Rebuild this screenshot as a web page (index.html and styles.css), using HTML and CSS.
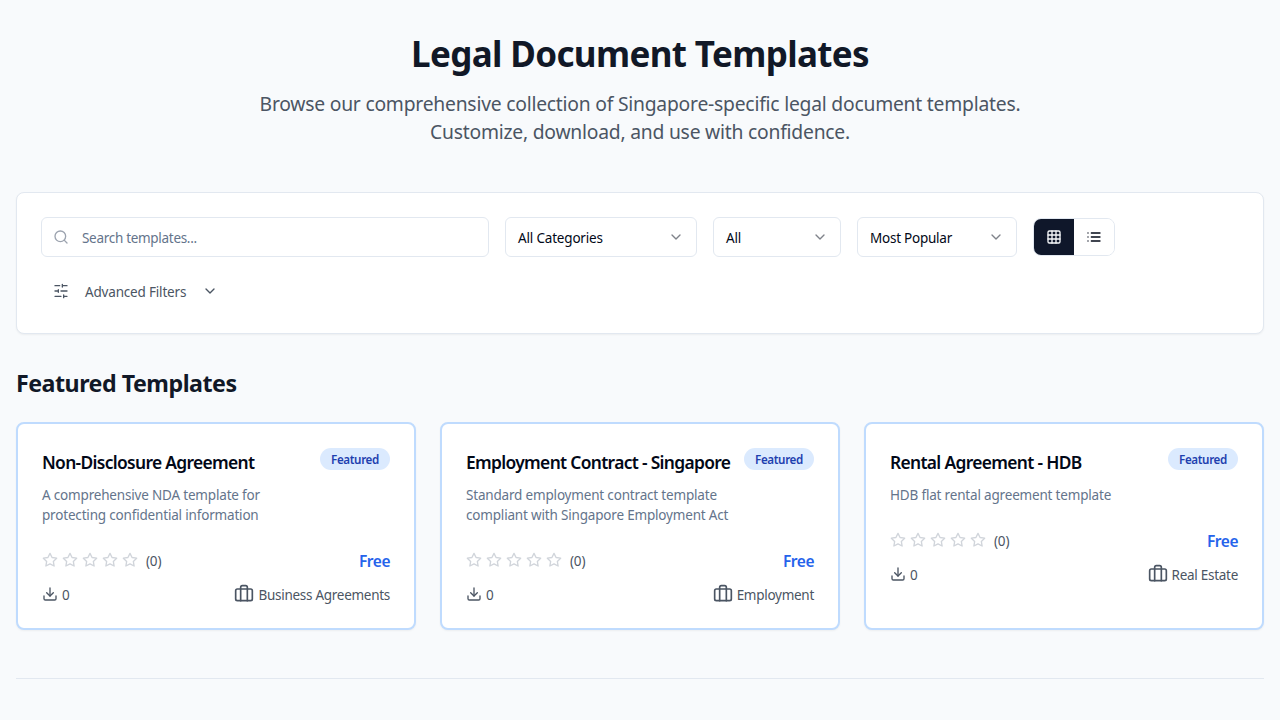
FILE: index.html
```html
<!DOCTYPE html>
<html lang="en">
<head>
<meta charset="utf-8">
<title>Legal Document Templates</title>
<link rel="stylesheet" href="styles.css">
</head>
<body>
<svg class="defs" width="0" height="0" aria-hidden="true">
  <symbol id="chevron" viewBox="0 0 24 24"><path d="m6 9 6 6 6-6"/></symbol>
  <symbol id="star" viewBox="0 0 24 24"><path d="M12 2l3.09 6.26L22 9.27l-5 4.87 1.18 6.88L12 17.77l-6.18 3.25L7 14.14 2 9.27l6.91-1.01L12 2z"/></symbol>
  <symbol id="download" viewBox="0 0 24 24"><path d="M21 15v4a2 2 0 0 1-2 2H5a2 2 0 0 1-2-2v-4"/><path d="m7 10 5 5 5-5"/><path d="M12 15V3"/></symbol>
  <symbol id="briefcase" viewBox="0 0 24 24"><rect width="20" height="14" x="2" y="6" rx="2"/><path d="M16 20V4a2 2 0 0 0-2-2h-4a2 2 0 0 0-2 2v16"/></symbol>
</svg>
<main class="page">
  <header class="hero">
    <h1>Legal Document Templates</h1>
    <p>Browse our comprehensive collection of Singapore-specific legal document templates. Customize, download, and use with confidence.</p>
  </header>
  <section class="filters">
    <div class="filter-row">
      <div class="search"><svg class="icon s16 muted" viewBox="0 0 24 24"><circle cx="11" cy="11" r="8"/><path d="m21 21-4.3-4.3"/></svg><span>Search templates...</span></div>
      <div class="select category"><span>All Categories</span><svg class="icon s16"><use href="#chevron"/></svg></div>
      <div class="select price"><span>All</span><svg class="icon s16"><use href="#chevron"/></svg></div>
      <div class="select sort"><span>Most Popular</span><svg class="icon s16"><use href="#chevron"/></svg></div>
      <div class="view-toggle">
        <button class="toggle active" aria-label="Grid"><svg class="icon s16" viewBox="0 0 24 24"><rect width="18" height="18" x="3" y="3" rx="2"/><path d="M3 9h18M3 15h18M9 3v18M15 3v18"/></svg></button>
        <button class="toggle" aria-label="List"><svg class="icon s16" viewBox="0 0 24 24"><path d="M8 6h13M8 12h13M8 18h13M3 6h.01M3 12h.01M3 18h.01"/></svg></button>
      </div>
    </div>
    <div class="advanced">
      <svg class="icon s16" viewBox="0 0 24 24"><path d="M21 4h-7M10 4H3M21 12h-9M8 12H3M21 20h-5M12 20H3M14 2v4M8 10v4M16 18v4"/></svg>
      <span>Advanced Filters</span>
      <svg class="icon s16"><use href="#chevron"/></svg>
    </div>
  </section>
  <section class="featured">
    <h2>Featured Templates</h2>
    <div class="cards">
      <article class="card">
        <div class="card-head"><div class="card-title"><h3>Non-Disclosure Agreement</h3><p class="desc">A comprehensive NDA template for protecting confidential information</p></div><span class="badge">Featured</span></div>
        <div class="rating"><div class="stars"><svg class="icon s16"><use href="#star"/></svg><svg class="icon s16"><use href="#star"/></svg><svg class="icon s16"><use href="#star"/></svg><svg class="icon s16"><use href="#star"/></svg><svg class="icon s16"><use href="#star"/></svg><span>(0)</span></div><strong>Free</strong></div>
        <div class="meta"><div><svg class="icon s16"><use href="#download"/></svg><span>0</span></div><div><svg class="icon s20"><use href="#briefcase"/></svg><span>Business Agreements</span></div></div>
      </article>
      <article class="card">
        <div class="card-head"><div class="card-title"><h3>Employment Contract - Singapore</h3><p class="desc">Standard employment contract template compliant with Singapore Employment Act</p></div><span class="badge">Featured</span></div>
        <div class="rating"><div class="stars"><svg class="icon s16"><use href="#star"/></svg><svg class="icon s16"><use href="#star"/></svg><svg class="icon s16"><use href="#star"/></svg><svg class="icon s16"><use href="#star"/></svg><svg class="icon s16"><use href="#star"/></svg><span>(0)</span></div><strong>Free</strong></div>
        <div class="meta"><div><svg class="icon s16"><use href="#download"/></svg><span>0</span></div><div><svg class="icon s20"><use href="#briefcase"/></svg><span>Employment</span></div></div>
      </article>
      <article class="card">
        <div class="card-head"><div class="card-title"><h3>Rental Agreement - HDB</h3><p class="desc">HDB flat rental agreement template</p></div><span class="badge">Featured</span></div>
        <div class="rating"><div class="stars"><svg class="icon s16"><use href="#star"/></svg><svg class="icon s16"><use href="#star"/></svg><svg class="icon s16"><use href="#star"/></svg><svg class="icon s16"><use href="#star"/></svg><svg class="icon s16"><use href="#star"/></svg><span>(0)</span></div><strong>Free</strong></div>
        <div class="meta"><div><svg class="icon s16"><use href="#download"/></svg><span>0</span></div><div><svg class="icon s20"><use href="#briefcase"/></svg><span>Real Estate</span></div></div>
      </article>
    </div>
  </section>
  <hr class="divider">
</main>
</body>
</html>
```

FILE: styles.css
```css
* { box-sizing: border-box; margin: 0; padding: 0; }
body { background: #f8fafc; color: #020817; font: 13.5px/20px "Noto Sans", sans-serif; letter-spacing: -.18px; overflow: hidden; }
.defs { display: block; width: 0; height: 0; }
.page { padding: 32px 16px 0; }
.icon { display: block; flex-shrink: 0; fill: none; stroke: currentColor; stroke-width: 2; stroke-linecap: round; stroke-linejoin: round; }
.s16 { width: 16px; height: 16px; }
.s20 { width: 20px; height: 20px; }
.hero { text-align: center; margin-bottom: 46px; }
.hero h1 { font-size: 35px; line-height: 44px; font-weight: 700; letter-spacing: -.64px; color: #111827; margin-bottom: 14px; }
.hero p { width: 768px; margin: 0 auto; font-size: 19.3px; line-height: 28px; letter-spacing: -.22px; color: #4b5563; }
.filters { height: 142px; padding: 24px; background: #fff; border: 1px solid #e2e8f0; border-radius: 8px; box-shadow: 0 1px 2px rgba(0,0,0,.05); }
.filter-row { display: flex; align-items: center; gap: 16px; }
.search, .select { display: flex; align-items: center; height: 40px; padding: 0 12px; border: 1px solid #e2e8f0; border-radius: 6px; background: #fff; }
.search { width: 448px; padding-left: 11px; gap: 13px; color: #64748b; letter-spacing: -.3px; }
.search span, .select span, .advanced span { padding-top: 2px; }
.muted { color: #9ca3af; }
.select { justify-content: space-between; }
.select .icon { opacity: .5; }
.category { width: 192px; }
.price { width: 128px; }
.sort { width: 160px; letter-spacing: -.24px; }
.view-toggle { display: flex; width: 82px; height: 38px; border: 1px solid #e2e8f0; border-radius: 8px; overflow: hidden; }
.toggle { display: flex; align-items: center; justify-content: center; width: 40px; border: 0; background: #fff; color: #020817; }
.toggle.active { background: #0f172a; color: #f8fafc; }
.advanced { display: flex; align-items: center; height: 36px; margin-top: 16px; padding: 0 12px; gap: 16px; color: #4b5563; }
.featured h2 { margin: 33px 0 23px; font-size: 23.2px; line-height: 32px; letter-spacing: -.48px; color: #111827; }
.cards { display: grid; grid-template-columns: repeat(3, minmax(0, 1fr)); gap: 24px; }
.card { height: 208px; padding: 24px; background: #fff; border: 2px solid #bfdbfe; border-radius: 8px; box-shadow: 0 1px 2px rgba(0,0,0,.05); }
.card-head { display: flex; justify-content: space-between; align-items: flex-start; }
.card-title { min-width: 0; }
.card h3 { font-size: 17.4px; line-height: 28px; font-weight: 600; letter-spacing: -.67px; white-space: nowrap; }
.desc { width: 270px; margin-top: 9px; color: #64748b; }
.badge { flex-shrink: 0; width: 70px; height: 22px; padding-top: 4px; text-align: center; border-radius: 999px; background: #dbeafe; color: #1e40af; font-size: 11.6px; line-height: 16px; font-weight: 600; letter-spacing: -.35px; }
.rating, .meta { display: flex; align-items: center; justify-content: space-between; }
.rating { margin-top: 23px; height: 24px; }
.stars { display: flex; align-items: center; gap: 4px; color: #4b5563; }
.stars .icon { color: #d1d5db; }
.stars span { margin-left: 4px; padding-top: 2px; }
.rating strong { padding-top: 2px; color: #2563eb; font-size: 15.5px; font-weight: 600; letter-spacing: -.45px; }
.meta { height: 20px; margin-top: 12px; color: #4b5563; letter-spacing: -.28px; }
.meta div { display: flex; align-items: center; gap: 4px; }
.meta span { padding-top: 2px; }
.divider { margin-top: 48px; border: 0; border-top: 1px solid #e2e8f0; }
```
